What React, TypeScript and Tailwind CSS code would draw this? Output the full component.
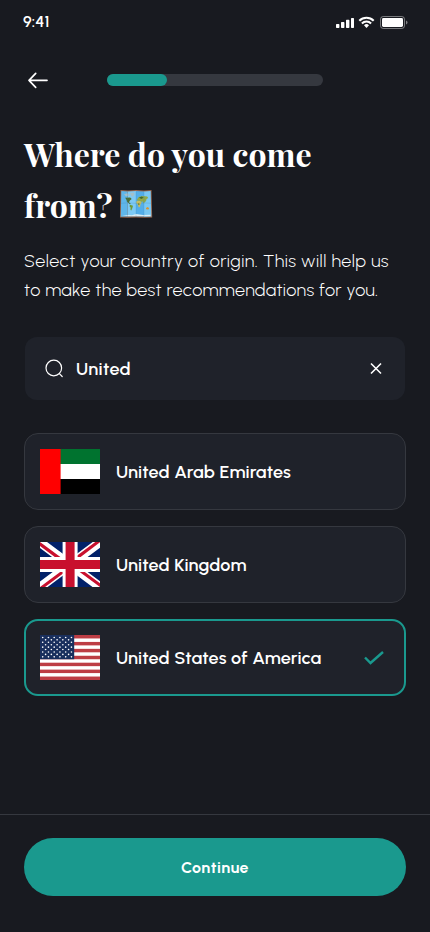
import type { ReactNode } from 'react';

interface Country {
  name: string;
  flag: ReactNode;
  selected?: boolean;
}

function EmiratesFlag() {
  return (
    <svg width="60" height="45" viewBox="0 0 60 45" className="shrink-0">
      <path fill="#00732f" d="M0 0h60v15H0z" />
      <path fill="#fff" d="M0 15h60v15H0z" />
      <path fill="#000" d="M0 30h60v15H0z" />
      <path fill="#f00" d="M0 0h20.6v45H0z" />
    </svg>
  );
}

function BritishFlag() {
  return (
    <svg width="60" height="45" viewBox="0 0 640 480" className="shrink-0">
      <path fill="#012169" d="M0 0h640v480H0z" />
      <path
        fill="#fff"
        d="m75 0 244 181L562 0h78v62L400 241l240 178v61h-80L320 301 81 480H0v-60l239-178L0 64V0z"
      />
      <path
        fill="#c8102e"
        d="m424 281 216 159v40L369 281zm-184 20 6 35L54 480H0zM640 0v3L391 191l2-44L590 0zM0 0l239 176h-60L0 42z"
      />
      <path fill="#fff" d="M241 0v480h160V0zM0 160v160h640V160z" />
      <path fill="#c8102e" d="M0 193v96h640v-96zM273 0v480h96V0z" />
    </svg>
  );
}

function AmericanFlag() {
  const stripe = 45 / 13;
  const stars = [0, 1, 2, 3, 4, 5, 6, 7, 8].flatMap((row) =>
    Array.from({ length: row % 2 ? 5 : 6 }, (_, col) => ({
      x: (row % 2 ? 5.6 : 2.7) + col * 5.75,
      y: 2.45 + row * 2.42,
    })),
  );

  return (
    <svg width="60" height="45" viewBox="0 0 60 45" className="shrink-0">
      <path fill="#fff" d="M0 0h60v45H0z" />
      {[0, 2, 4, 6, 8, 10, 12].map((n) => (
        <rect key={n} y={n * stripe} width="60" height={stripe} fill="#bd3d44" />
      ))}
      <path fill="#192f5d" d="M0 0h34.2v24.2H0z" />
      {stars.map((star) => (
        <circle key={`${star.x}-${star.y}`} cx={star.x} cy={star.y} r="0.82" fill="#fff" />
      ))}
    </svg>
  );
}

function WorldMap() {
  return (
    <svg width="34" height="29" viewBox="0 0 34 29" className="-mt-0.5 ml-[7px]" aria-label="World map">
      <path fill="#98674e" d="m1.5 1 7.5.6 8-.6 8 .6 7.500-.6.7 27.400-8.200.4-8-.4-8.500.4-7.500-.4z" />
      <path fill="#5fb6ea" d="m2.300 2.100 6.200.5v24.900l-6.700.2z" />
      <path fill="#7dc9f4" d="m8.500 2.600 8.500-.5v25.200l-8.500.3z" />
      <path fill="#54aee8" d="m17 2.100 8 .5v25l-8-.4z" />
      <path fill="#79c8f3" d="m25 2.600 6.700-.5.6 25.500-7.300.1z" />
      <path fill="#a3bfc9" d="m5 5.500 3-1.300 2.500 1-.5 1.500-3 .6zM11 4l3.700-.4.8 2-2 2.200-1.700-1.500z" />
      <path fill="#dceef5" d="m3 26.900 6-.9 4 .3 4-1.300 7 1 7.500-.3v1.500l-14 .1z" />
      <path fill="#4f7032" d="m6 8.800 5.200-.4 1.500 1.700-1.800 1.400-.9 1.800 1.800 1.400-1 .5-3-2.600-.3-2.100z" />
      <path fill="#6f9a35" d="m11 15.800 3 1-.6 2.200-1.100 2.600-.8-.7.1-2.300-1.100-1.400z" />
      <path fill="#92a947" d="m18 10.500 1.800-2.500 3.700-1 4.700.4 1 1.700-1.700.9-.4 2.100-1.400 1.100-1 1.200-1-1.900-1.600.2-1.700-1-2 .1z" />
      <path fill="#d0bf58" d="m17.300 12.200 3.500-.2 1.900 1.600-1.300 1.800-.3 2.200-1.200.9-1.100-3.100-1.500-1.100z" />
      <path fill="#426a31" d="m20 8.500 2.700-1 2 1.200-2.500 1.200zM18.700 14.200l1.900.5-.6 1.700zM7 9.300l2.600.4-1.400 1.900z" />
      <path fill="#d9962e" d="m27 18.900 1.700-.8 1.500 1.200-.7 1.300-2.400-.3z" />
      <path
        fill="none"
        stroke="#357eab"
        strokeOpacity=".35"
        strokeWidth=".6"
        d="M8.500 3v24.700M17 2.300v25M25 3v24.700M2 14.300l6.500-.4 8.500.4 8-.4 7.300.4"
      />
    </svg>
  );
}

function StatusBar() {
  return (
    <div className="flex h-11 items-center justify-between pr-[22px] pl-[23px] text-white">
      <span className="text-[16px] leading-5 font-semibold tracking-[0.1px]">9:41</span>
      <svg width="72" height="14" viewBox="0 0 72 14">
        <path
          fill="#fff"
          d="M.7 9h2q.7 0 .7.7v2.600q0 .7-.7.7h-2q-.7 0-.7-.7V9.700q0-.7.700-.7zm5-2h2q.7 0 .7.7v4.600q0 .7-.7.7h-2q-.7 0-.7-.7V7.700q0-.7.700-.7zm5-2.300h2q.7 0 .7.700v6.900q0 .7-.7.7h-2q-.7 0-.7-.7V5.400q0-.7.700-.7zm5-1.700h1.600q.7 0 .7.700v8.600q0 .7-.7.700h-1.600q-.7 0-.7-.7V3.700q0-.7.7-.7z"
        />
        <g fill="none" stroke="#fff" strokeWidth="2.100">
          <path d="M23.300 5.700a10.300 10.300 0 0 1 14.400 0M25.900 8.400a6.500 6.500 0 0 1 9.200 0" />
        </g>
        <path fill="#fff" d="M28 10.300a3.600 3.600 0 0 1 5 0l-2.500 2.700z" />
        <rect x="44.500" y="1.500" width="24" height="12" rx="2.700" fill="none" stroke="#fff" strokeOpacity=".42" />
        <rect x="46" y="3" width="21" height="9" rx="1.400" fill="#fff" />
        <path fill="#fff" fillOpacity=".45" d="M70 5.500q1.500.4 1.500 2t-1.500 2z" />
      </svg>
    </div>
  );
}

function CountryRow({ name, flag, selected }: Country) {
  return (
    <button
      className={`flex h-[77px] w-full items-center rounded-[14px] bg-[#1f222a] text-left ${
        selected
          ? 'border-2 border-[#1a998e] pr-[19px] pl-[14px]'
          : 'border border-[#35383f] pr-5 pl-[15px]'
      }`}
    >
      {flag}
      <span className="ml-4 flex-1 text-[18px] leading-6 font-semibold tracking-[0.13px] whitespace-nowrap">
        {name}
      </span>
      {selected && (
        <svg width="22" height="16" viewBox="0 0 22 16" fill="none">
          <path d="m2 7.500 5.500 5.500L20 2" stroke="#1a998e" strokeWidth="2.400" />
        </svg>
      )}
    </button>
  );
}

const countries: Country[] = [
  { name: 'United Arab Emirates', flag: <EmiratesFlag /> },
  { name: 'United Kingdom', flag: <BritishFlag /> },
  { name: 'United States of America', flag: <AmericanFlag />, selected: true },
];

export default function App() {
  return (
    <main className="flex h-[932px] w-[430px] flex-col overflow-hidden bg-[#181a20] font-[Urbanist,Lato,sans-serif] text-white">
      <StatusBar />
      <header className="flex h-[72px] items-center pl-[27px]">
        <button aria-label="Go back">
          <svg width="22" height="18" viewBox="0 0 22 18" fill="none">
            <path
              d="M20 9.300H2m6.700-7L2 9.300l6.700 7"
              stroke="#fff"
              strokeWidth="1.700"
              strokeLinecap="round"
              strokeLinejoin="round"
            />
          </svg>
        </button>
        <div className="ml-[58px] h-3 w-[216px] rounded-full bg-[#35383f]">
          <div className="h-3 w-[60px] rounded-full bg-[#1a998e]" />
        </div>
      </header>

      <section className="flex flex-1 flex-col px-6 pt-3">
        <h1 className="font-['Playfair_Display','Liberation_Serif',serif] text-[32px] leading-[51px] font-bold whitespace-nowrap">
          <span className="block">Where do you come</span>
          <span className="flex items-center">
            <span>from?</span>
            <WorldMap />
          </span>
        </h1>
        <p className="mt-[17px] text-[18px] leading-[29px] font-light whitespace-nowrap text-white">
          <span className="block tracking-[0.45px]">Select your country of origin. This will help us</span>
          <span className="block tracking-[0.3px]">to make the best recommendations for you.</span>
        </p>

        <div className="mx-px mt-8 flex h-[63px] shrink-0 items-center rounded-[12px] bg-[#1f222a] pr-[22px] pl-5">
          <svg width="19" height="19" viewBox="0 0 19 19" fill="none" stroke="#fff" strokeWidth="1.200" strokeLinecap="round">
            <circle cx="8.800" cy="9" r="7.800" />
            <path d="m14.600 14.800 2.600 2.700" />
          </svg>
          <span className="ml-3 flex-1 text-[18px] leading-6 font-semibold tracking-[0.35px]">United</span>
          <svg width="14" height="14" viewBox="0 0 14 14" stroke="#fff" strokeWidth="1.600">
            <path d="m2 1.500 10 10M12 1.500l-10 10" />
          </svg>
        </div>

        <div className="mt-[33px] flex flex-col gap-4">
          {countries.map((country) => (
            <CountryRow key={country.name} {...country} />
          ))}
        </div>
      </section>

      <footer className="h-[118px] border-t border-[#35383f] px-6 pt-[23px]">
        <button className="h-[58px] w-full rounded-full bg-[#1a998e] pt-px text-[16px] font-bold tracking-[0.5px]">
          Continue
        </button>
      </footer>
    </main>
  );
}
